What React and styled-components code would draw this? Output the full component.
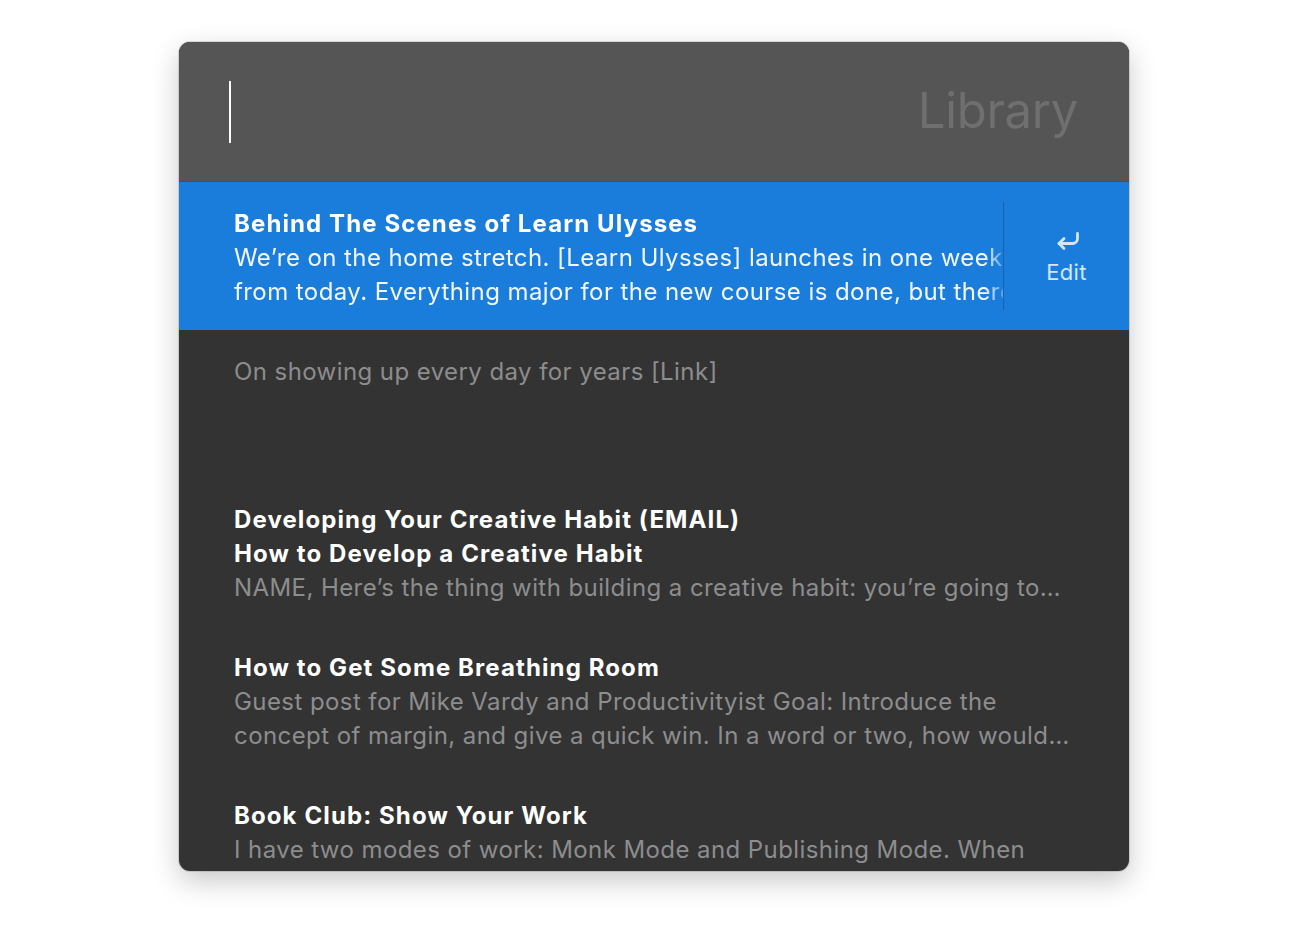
import styled, { createGlobalStyle } from 'styled-components'

const notes = [
  {
    title: 'Behind The Scenes of Learn Ulysses',
    lines: [
      'We’re on the home stretch. [Learn Ulysses] launches in one week',
      'from today. Everything major for the new course is done, but there are',
    ],
    selected: true,
  },
  { title: '', body: 'On showing up every day for years [Link]', minLines: 3 },
  {
    title: 'Developing Your Creative Habit (EMAIL)\nHow to Develop a Creative Habit',
    body: 'NAME, Here’s the thing with building a creative habit: you’re going to…',
  },
  {
    title: 'How to Get Some Breathing Room',
    body: 'Guest post for Mike Vardy and Productivityist Goal: Introduce the concept of margin, and give a quick win. In a word or two, how would…',
  },
  {
    title: 'Book Club: Show Your Work',
    body: 'I have two modes of work: Monk Mode and Publishing Mode. When',
  },
]

function App() {
  return (
    <>
      <GlobalStyle />
      <Page>
        <Panel>
          <Header>
            <Caret />
            <HeaderTitle>Library</HeaderTitle>
          </Header>
          <List>
            {notes.map((n, i) => (
              <Note key={i} $selected={n.selected} $minLines={n.minLines}>
                {n.selected ? (
                  <>
                    <FadedText>
                      <Title>{n.title}</Title>
                      {n.lines.map((l) => (
                        <Line key={l}>{l}</Line>
                      ))}
                    </FadedText>
                    <EditAction>
                      <svg width="26" height="22" viewBox="0 0 26 22" fill="none" stroke="currentColor" strokeWidth="2.8" strokeLinecap="round" strokeLinejoin="round">
                        <path d="M22.5 2.5v5a5 5 0 0 1-5 5H4" />
                        <path d="M9 7.5L4 12.5l5 5" />
                      </svg>
                      <span>Edit</span>
                    </EditAction>
                  </>
                ) : (
                  <NoteText>
                    {n.title && <Title>{n.title}</Title>}
                    <Body>{n.body}</Body>
                  </NoteText>
                )}
              </Note>
            ))}
          </List>
        </Panel>
      </Page>
    </>
  )
}

export default App

const GlobalStyle = createGlobalStyle`
  html, body {
    margin: 0;
    padding: 0;
    background: #ffffff;
  }
  body {
    font-family: Inter, "Noto Sans", sans-serif;
  }
`

const Page = styled.div`
  width: 1300px;
  height: 932px;
  padding: 42px 0 0 179px;
  box-sizing: border-box;
  display: flex;
`

const Panel = styled.div`
  width: 950px;
  height: 829px;
  border-radius: 11px;
  overflow: hidden;
  background: #333333;
  box-shadow: 0 10px 28px rgba(0, 0, 0, 0.22), 0 0 0 1px rgba(0, 0, 0, 0.12);
  display: flex;
  flex-direction: column;
`

const Header = styled.div`
  height: 139px;
  flex-shrink: 0;
  background: #555555;
  display: flex;
  align-items: center;
  justify-content: space-between;
  padding: 0 51px 0 50px;
  border-bottom: 1px solid #4d4d4d;
`

const Caret = styled.div`
  width: 2px;
  height: 62px;
  background: #ffffff;
`

const HeaderTitle = styled.div`
  font-size: 49px;
  color: #6f6f6f;
  font-weight: 400;
  letter-spacing: -0.3px;
  margin-top: -2px;
`

const List = styled.div`
  flex: 1;
  overflow: hidden;
`

const Note = styled.div`
  display: flex;
  align-items: stretch;
  padding: 25px 0 21px 55px;
  min-height: ${(p) => (p.$minLines ? p.$minLines * 34 : 0)}px;
  background: ${(p) => (p.$selected ? '#1a7ddb' : 'transparent')};
`

const NoteText = styled.div`
  flex: 1;
  min-width: 0;
  padding-right: 58px;
`

const FadedText = styled.div`
  flex: 1;
  min-width: 0;
  overflow: hidden;
  -webkit-mask-image: linear-gradient(to right, #000 calc(100% - 18px), rgba(0, 0, 0, 0.3) 100%);
`

const Title = styled.div`
  font-size: 24px;
  line-height: 34px;
  font-weight: 700;
  letter-spacing: 1.1px;
  color: #ffffff;
  white-space: pre-line;
`

const Body = styled.div`
  font-size: 24px;
  line-height: 34px;
  letter-spacing: 0.42px;
  color: #8d8d8d;
  display: -webkit-box;
  -webkit-line-clamp: 2;
  -webkit-box-orient: vertical;
  overflow: hidden;
`

const Line = styled.div`
  font-size: 24px;
  line-height: 34px;
  letter-spacing: 0.42px;
  color: #f2f7fd;
  white-space: nowrap;
`

const EditAction = styled.div`
  width: 125px;
  flex-shrink: 0;
  border-left: 1px solid #1562ad;
  margin: -5px 0 -1px;
  padding-top: 7px;
  display: flex;
  flex-direction: column;
  align-items: center;
  justify-content: center;
  gap: 6px;
  color: #d3e6fa;
  font-size: 22px;
  letter-spacing: 0.3px;

  svg {
    margin: -4px 0 0 2px;
  }
`
